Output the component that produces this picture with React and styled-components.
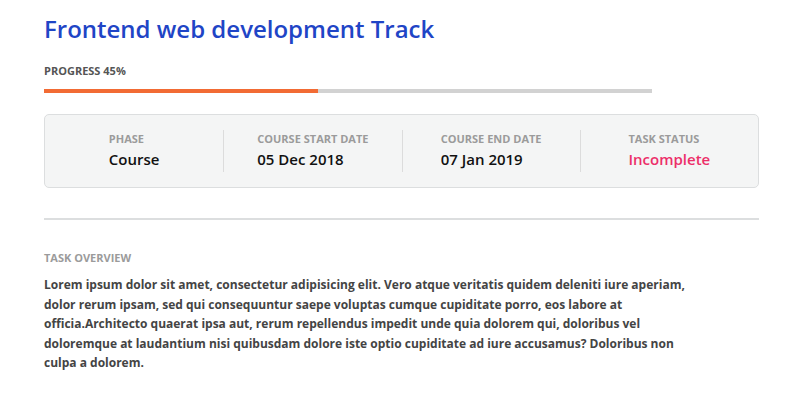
import React from "react"
import styled, { createGlobalStyle } from "styled-components"

const GlobalStyle = createGlobalStyle`
    body {
        margin: 0;
        background: #ffffff;
        font-family: "Open Sans", "Liberation Sans", sans-serif;
    }
`

const Page = styled.div`
    padding: 12px 28px 0 44px;
`

const Title = styled.h1`
    margin: 0;
    font-size: 24px;
    font-weight: 600;
    line-height: 33px;
    color: #1f45c6;
`

const SmallLabel = styled.div`
    font-size: 11px;
    font-weight: 700;
    line-height: 14px;
    text-transform: uppercase;
    color: ${props => props.color || "#9b9b9b"};
`

const ProgressSection = styled.div`
    margin-top: 19px;
`

const Track = styled.div`
    margin-top: 11px;
    width: 608px;
    height: 4px;
    background: #d2d2d2;
`

const Fill = styled.div`
    height: 100%;
    background: #f26b34;
`

const InfoCard = styled.div`
    margin-top: 21px;
    display: grid;
    grid-template-columns: repeat(4, 1fr);
    padding: 15px 0;
    background: #f4f5f5;
    border: 1px solid #dcdedf;
    border-radius: 5px;
`

const Cell = styled.div`
    display: flex;
    justify-content: center;
    border-left: ${props => (props.first ? "none" : "1px solid #dcdcdc")};
`

const CellInner = styled.div`
    padding-top: 2px;
    height: 40px;
`

const Value = styled.div`
    margin-top: 3px;
    font-size: 15px;
    font-weight: 600;
    line-height: 20px;
    color: ${props => props.color || "#111111"};
`

const Divider = styled.hr`
    margin: 30px 0 0;
    border: none;
    height: 2px;
    background: #dcdedf;
`

const Overview = styled.div`
    margin-top: 31px;
`

const Paragraph = styled.p`
    margin: 10px 0 0;
    max-width: 655px;
    font-size: 12px;
    font-weight: 700;
    line-height: 19.5px;
    color: #444444;
`

const info = [
    { label: "Phase", value: "Course" },
    { label: "Course start date", value: "05 Dec 2018" },
    { label: "Course end date", value: "07 Jan 2019" },
    { label: "Task status", value: "Incomplete", color: "#ec2f69" },
]

function App() {
    const progress = 45

    return (
        <>
            <GlobalStyle />
            <Page>
                <Title>Frontend web development Track</Title>

                <ProgressSection>
                    <SmallLabel color="#555555">Progress {progress}%</SmallLabel>
                    <Track>
                        <Fill style={{ width: `${progress}%` }} />
                    </Track>
                </ProgressSection>

                <InfoCard>
                    {info.map((item, i) => (
                        <Cell key={item.label} first={i === 0}>
                            <CellInner>
                                <SmallLabel>{item.label}</SmallLabel>
                                <Value color={item.color}>{item.value}</Value>
                            </CellInner>
                        </Cell>
                    ))}
                </InfoCard>

                <Divider />

                <Overview>
                    <SmallLabel>Task overview</SmallLabel>
                    <Paragraph>
                        Lorem ipsum dolor sit amet, consectetur adipisicing
                        elit. Vero atque veritatis quidem deleniti iure
                        aperiam, dolor rerum ipsam, sed qui consequuntur saepe
                        voluptas cumque cupiditate porro, eos labore at
                        officia.Architecto quaerat ipsa aut, rerum repellendus
                        impedit unde quia dolorem qui, doloribus vel doloremque
                        at laudantium nisi quibusdam dolore iste optio
                        cupiditate ad iure accusamus? Doloribus non culpa a
                        dolorem.
                    </Paragraph>
                </Overview>
            </Page>
        </>
    )
}

export default App
